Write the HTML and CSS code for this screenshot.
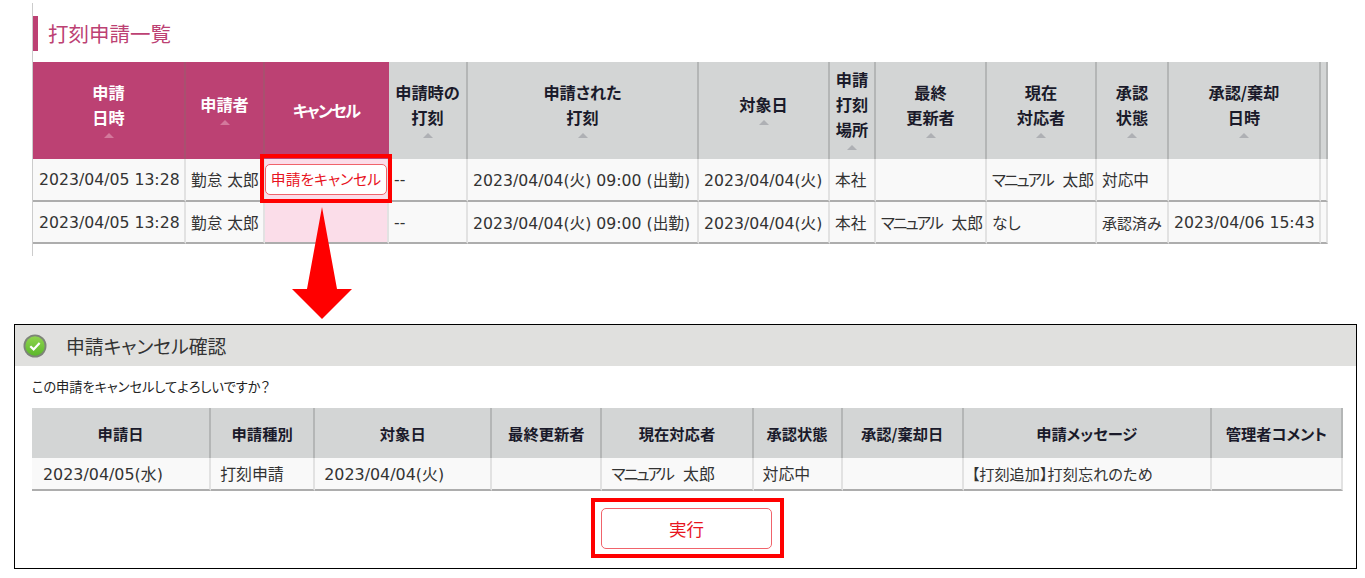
FILE: index.html
```html
<!DOCTYPE html>
<html lang="ja">
<head>
<meta charset="utf-8">
<title>打刻申請一覧</title>
<link rel="stylesheet" href="styles.css">
</head>
<body>
<main class="page">
  <section class="list">
    <h1 class="list-title">打刻申請一覧</h1>
    <table class="grid list-table">
      <colgroup>
        <col class="c153"><col class="c79"><col class="c124"><col class="c79"><col class="c231"><col class="c131"><col class="c46"><col class="c111"><col class="c110"><col class="c72"><col class="c152"><col class="c7">
      </colgroup>
      <thead>
        <tr>
          <th class="active">申請<br>日時<i class="sort"></i></th>
          <th class="active">申請者<i class="sort"></i></th>
          <th class="active last-active"><span class="kana-head">キャンセル</span></th>
          <th>申請時の<br>打刻<i class="sort"></i></th>
          <th>申請された<br>打刻<i class="sort"></i></th>
          <th>対象日<i class="sort"></i></th>
          <th>申請<br>打刻<br>場所<i class="sort"></i></th>
          <th>最終<br>更新者<i class="sort"></i></th>
          <th>現在<br>対応者<i class="sort"></i></th>
          <th>承認<br>状態<i class="sort"></i></th>
          <th>承認/棄却<br>日時<i class="sort"></i></th>
          <th></th>
        </tr>
      </thead>
      <tbody>
        <tr>
          <td class="first">2023/04/05 13:28</td><td>勤怠 太郎</td>
          <td class="pink"><button class="cancel-btn" type="button">申請をキャンセル</button></td>
          <td>--</td><td>2023/04/04(火) 09:00 (出勤)</td><td>2023/04/04(火)</td><td>本社</td><td></td>
          <td><span class="kana">マニュアル</span>&nbsp;&nbsp;太郎</td><td>対応中</td><td></td><td></td>
        </tr>
        <tr>
          <td class="first">2023/04/05 13:28</td><td>勤怠 太郎</td>
          <td class="pink"></td>
          <td>--</td><td>2023/04/04(火) 09:00 (出勤)</td><td>2023/04/04(火)</td><td>本社</td>
          <td><span class="kana">マニュアル</span>&nbsp;&nbsp;太郎</td><td>なし</td><td class="small">承認済み</td><td>2023/04/06 15:43</td><td></td>
        </tr>
      </tbody>
    </table>
  </section>

  <div class="callout-box"></div>
  <svg class="callout-arrow" width="60" height="112" viewBox="0 0 60 112" aria-hidden="true">
    <polygon points="30,0 45,82 60,82 30,112 0,82 15,82" fill="#ff0000"/>
  </svg>

  <section class="modal">
    <header class="modal-head">
      <svg class="ok-icon" width="24" height="24" viewBox="0 0 24 24" aria-hidden="true">
        <defs>
          <linearGradient id="okg" x1="0" y1="0" x2="0" y2="1">
            <stop offset="0" stop-color="#8fd44e"/>
            <stop offset="1" stop-color="#5cb82c"/>
          </linearGradient>
        </defs>
        <circle cx="12" cy="12" r="11.5" fill="#7d8478"/>
        <circle cx="12" cy="12" r="9.7" fill="url(#okg)"/>
        <path d="M7.3 12.2 10.6 15.4 16.6 8.9" fill="none" stroke="#fff" stroke-width="2.2"/>
      </svg>
      <h2 class="modal-title">申請キャンセル確認</h2>
    </header>
    <div class="modal-body">
      <p class="question">この申請をキャンセルしてよろしいですか？</p>
      <table class="grid confirm-table">
        <colgroup>
          <col class="m179"><col class="m104"><col class="m177"><col class="m110"><col class="m151"><col class="m89"><col class="m121"><col class="m248"><col class="m131">
        </colgroup>
        <thead>
          <tr><th>申請日</th><th>申請種別</th><th>対象日</th><th>最終更新者</th><th>現在対応者</th><th>承認状態</th><th>承認/棄却日</th><th>申請メッセージ</th><th>管理者コメント</th></tr>
        </thead>
        <tbody>
          <tr>
            <td class="pad-date">2023/04/05(水)</td><td>打刻申請</td><td>2023/04/04(火)</td><td></td><td><span class="kana">マニュアル</span>&nbsp;&nbsp;太郎</td><td>対応中</td><td></td><td class="message">【打刻追加】打刻忘れのため</td><td></td>
          </tr>
        </tbody>
      </table>
      <div class="action">
        <div class="action-frame"><button class="run-btn" type="button">実行</button></div>
      </div>
    </div>
  </section>
</main>
</body>
</html>
```
FILE: styles.css
```css
* { box-sizing: border-box; }
html, body { margin: 0; padding: 0; background: #fff; }
body {
  font-family: "DejaVu Sans", "Noto Sans CJK JP", sans-serif;
  color: #333;
  overflow: hidden;
}
.page { position: relative; width: 1365px; height: 578px; padding-top: 3px; }

.list {
  margin-left: 32px;
  width: 1296px;
  padding-top: 13px;
  padding-bottom: 12px;
  border-left: 1px solid #ccc;
}
.list-title {
  margin: 0 0 11px;
  height: 35px;
  padding-left: 10px;
  border-left: 5px solid #bc4173;
  font: 400 20.5px/35px "Noto Sans CJK JP", sans-serif;
  color: #bc4173;
}

.grid { border-collapse: separate; border-spacing: 0; table-layout: fixed; }
.grid th {
  padding: 0;
  background: #d3d5d5;
  border-right: 2px solid #b4b6b6;
  color: #1a1a2a;
  font-family: "Noto Sans CJK JP", sans-serif;
  font-weight: 700;
  text-align: center;
  vertical-align: middle;
}
.grid td {
  padding: 0 0 0 5px;
  background: #f9f9f9;
  border-right: 2px solid #e2e2e2;
  border-bottom: 2px solid #adadad;
  white-space: nowrap;
  overflow: hidden;
  vertical-align: middle;
  color: #333;
}

.list-table { width: 1295px; }
.list-table th { height: 97px; font-size: 16.2px; line-height: 25px; font-feature-settings: "palt"; }
.list-table th.active { background: #bc4173; color: #fff; border-right-color: #a9506f; }
.list-table th.last-active { border-right-color: #bc4173; }
.list-table td { height: 43px; font-size: 15.7px; font-feature-settings: "palt"; }
.list-table td.first { padding-left: 6px; }
.list-table tbody tr + tr td { height: 42px; }
.list-table td.pink { background: #fbdde9; padding: 0; }
.list-table td.small { font-size: 15px; }

.kana { letter-spacing: -2px; }
.kana-head { letter-spacing: -1.6px; }

.sort {
  display: block;
  width: 0;
  height: 0;
  margin: 3px auto 4px;
  border-left: 5px solid transparent;
  border-right: 5px solid transparent;
  border-bottom: 5px solid #aeb0b4;
}
.active .sort { border-bottom-color: #d3799c; }

.c153 { width: 153px; } .c152 { width: 152px; } .c79 { width: 79px; } .c124 { width: 124px; }
.c231 { width: 231px; } .c131 { width: 131px; } .c46 { width: 46px; }
.c111 { width: 111px; } .c110 { width: 110px; } .c72 { width: 72px; } .c7 { width: 7px; }

.cancel-btn {
  display: block;
  width: 122px;
  height: 31px;
  margin: 0;
  padding: 0;
  background: #fff;
  border: 1px solid #f0636b;
  border-radius: 5px;
  color: #e8141e;
  font: 400 14.8px/1 "Noto Sans CJK JP", sans-serif;
  font-feature-settings: "palt";
}

.callout-box {
  position: absolute;
  left: 260px;
  top: 154px;
  width: 132px;
  height: 49px;
  border: 4px solid #ff0000;
}
.callout-arrow { position: absolute; left: 292px; top: 207px; }

.modal {
  width: 1343px;
  height: 245px;
  margin: 68px 0 0 14px;
  border: 1px solid #000;
}
.modal-head {
  display: flex;
  align-items: center;
  height: 41px;
  padding-left: 8px;
  background: #e0e0de;
}
.modal-title {
  margin: 0 0 0 19px;
  font: 400 18.8px/41px "Noto Sans CJK JP", sans-serif;
  font-feature-settings: "palt";
  color: #333;
}
.modal-body { padding: 0 13px 0 17px; }
.question {
  margin: 0;
  height: 42px;
  font: 400 13.2px/42px "Noto Sans CJK JP", sans-serif;
  font-feature-settings: "palt";
  color: #222;
}
.confirm-table { width: 1311px; }
.confirm-table th { height: 50px; font-size: 15.3px; font-feature-settings: "palt"; }
.confirm-table td { height: 33px; font-size: 15.9px; padding: 0 0 1px 9px; font-feature-settings: "palt"; }
.confirm-table td.pad-date { padding-left: 11px; }
.confirm-table td.message { font-size: 15.2px; padding-left: 8px; }

.m179 { width: 179px; } .m104 { width: 104px; } .m177 { width: 177px; }
.m110 { width: 110px; } .m151 { width: 151px; } .m89 { width: 89px; }
.m121 { width: 121px; } .m248 { width: 248px; } .m131 { width: 131px; }

.action { display: flex; justify-content: center; margin-top: 7px; }
.action-frame { width: 193px; height: 60px; padding: 6px; border: 4px solid #ff0000; }
.run-btn {
  display: block;
  width: 171px;
  height: 41px;
  margin: 0;
  padding: 1px 0 0;
  background: #fff;
  border: 1px solid #f0636b;
  border-radius: 5px;
  color: #e8141e;
  font: 400 17.5px/1 "Noto Sans CJK JP", sans-serif;
}
```
